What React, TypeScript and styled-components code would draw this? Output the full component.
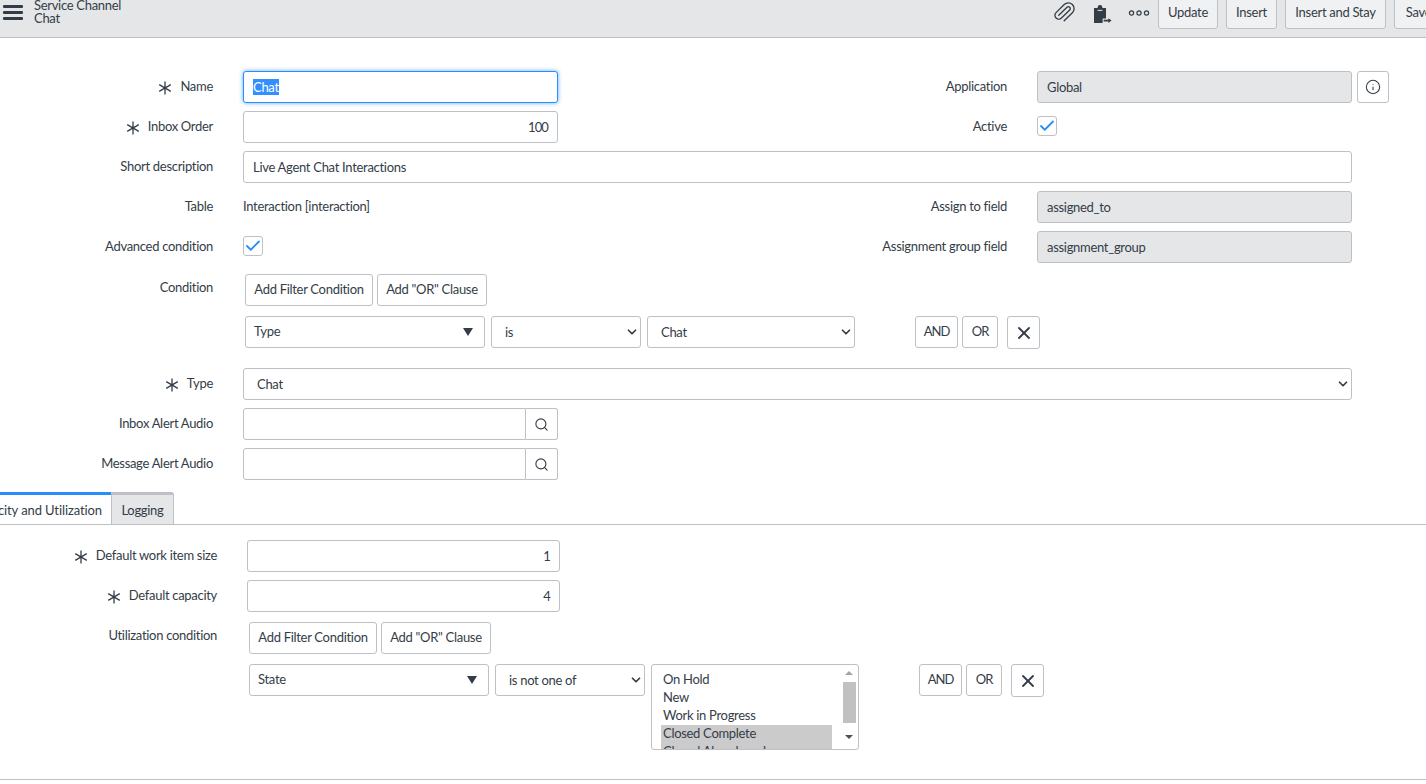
import { FC, ReactNode } from 'react'
import styled, { createGlobalStyle } from 'styled-components'
import { Paperclip, Search, Info, X, ChevronDown, Check } from 'lucide-react'

const colors = {
  text: '#343d47',
  border: '#bdc0c4',
  header: '#e4e6e7',
  readonly: '#e4e6e7',
  blue: '#278efc',
  selection: '#338fff',
}

const GlobalStyle = createGlobalStyle`
  html, body {
    margin: 0;
    padding: 0;
    height: 784px;
    overflow: hidden;
    background: #fff;
  }
  body {
    font-family: 'Lato', 'Open Sans', sans-serif;
    font-size: 13px;
    letter-spacing: -0.3px;
    color: ${colors.text};
  }
`

const Star: FC = () => (
  <StarIcon viewBox="0 0 14 14" width="14" height="14">
    <path d="M7 0.5V13.5M1.2 3.6L12.8 10.4M12.8 3.6L1.2 10.4" stroke={colors.text} strokeWidth="1.3" fill="none" />
  </StarIcon>
)

const ClipboardIcon: FC = () => (
  <svg viewBox="0 0 19 19" width="19" height="19">
    <path d="M1 3h3.6V2.4a2.4 2.4 0 0 1 4.8 0V3H13v10.6h-3.4V18H1z" fill={colors.text} />
    <path d="M4.6 5.4h4.8" stroke={colors.header} strokeWidth="1" />
    <path d="M10.6 15.6h6.4" stroke={colors.text} strokeWidth="1.8" fill="none" />
    <path d="M15.4 13.2l3.2 2.4-3.2 2.4z" fill={colors.text} />
  </svg>
)

const MoreIcon: FC = () => (
  <svg viewBox="0 0 22 6" width="22" height="6">
    <circle cx="3.5" cy="3" r="2.1" stroke={colors.text} strokeWidth="1.2" fill="none" />
    <circle cx="11" cy="3" r="2.1" stroke={colors.text} strokeWidth="1.2" fill="none" />
    <circle cx="18.5" cy="3" r="2.1" stroke={colors.text} strokeWidth="1.2" fill="none" />
  </svg>
)

const Label: FC<{ required?: boolean; children: ReactNode; $raised?: boolean }> = ({ required, children, $raised }) => (
  <LabelBox $raised={$raised}>
    {required && <Star />}
    <span>{children}</span>
  </LabelBox>
)

interface FilterProps {
  field: string
  operator: string
  value?: string
  options?: { name: string; selected?: boolean }[]
}

const FilterRow: FC<FilterProps> = ({ field, operator, value, options }) => (
  <FilterLine>
    <Field $width={240}>
      <FieldText>{field}</FieldText>
      <DownTriangle />
    </Field>
    <Select $width={150}>
      <span>{operator}</span>
      <ChevronDown size={14} strokeWidth={3} />
    </Select>
    {options ? (
      <ListBox>
        <OptionList>
          {options.map((option) => (
            <Option key={option.name} $selected={option.selected}>
              {option.name}
            </Option>
          ))}
        </OptionList>
        <ScrollTrack>
          <ArrowUp />
          <ScrollThumb />
          <ArrowDown />
        </ScrollTrack>
      </ListBox>
    ) : (
      <Select $width={208}>
        <span>{value}</span>
        <ChevronDown size={14} strokeWidth={3} />
      </Select>
    )}
    <LogicButtons>
      <LogicButton $width={43}>AND</LogicButton>
      <LogicButton $width={36}>OR</LogicButton>
      <RemoveButton>
        <X size={20} strokeWidth={2.2} />
      </RemoveButton>
    </LogicButtons>
  </FilterLine>
)

const App: FC = () => {
  const stateOptions = [
    { name: 'On Hold' },
    { name: 'New' },
    { name: 'Work in Progress' },
    { name: 'Closed Complete', selected: true },
    { name: 'Closed Abandoned', selected: true },
  ]

  return (
    <>
      <GlobalStyle />
      <Header>
        <HeaderLeft>
          <Burger>
            <i />
            <i />
            <i />
          </Burger>
          <Titles>
            <div>Service Channel</div>
            <div>Chat</div>
          </Titles>
        </HeaderLeft>
        <HeaderRight>
          <ClipIcon>
            <Paperclip size={23} strokeWidth={1.4} />
          </ClipIcon>
          <ClipboardSlot>
            <ClipboardIcon />
          </ClipboardSlot>
          <MoreSlot>
            <MoreIcon />
          </MoreSlot>
          <HeaderButtons>
            <HeaderButton $width={60}>Update</HeaderButton>
            <HeaderButton $width={51}>Insert</HeaderButton>
            <HeaderButton $width={101}>Insert and Stay</HeaderButton>
            <HeaderButton $width={49}>Save</HeaderButton>
          </HeaderButtons>
        </HeaderRight>
      </Header>

      <Form>
        <Row>
          <Label required>Name</Label>
          <FocusedInput>
            <Selected>Chat</Selected>
          </FocusedInput>
          <RightLabel>Application</RightLabel>
          <ReadOnly>Global</ReadOnly>
          <InfoButton>
            <Info size={16} strokeWidth={1.6} />
          </InfoButton>
        </Row>
        <Row>
          <Label required>Inbox Order</Label>
          <Input $width={315} $right>
            100
          </Input>
          <RightLabel>Active</RightLabel>
          <CheckBox $raised>
            <Check size={18} strokeWidth={2.4} />
          </CheckBox>
        </Row>
        <Row>
          <Label>Short description</Label>
          <Input $width={1109}>Live Agent Chat Interactions</Input>
        </Row>
        <Row>
          <Label>Table</Label>
          <PlainValue>Interaction [interaction]</PlainValue>
          <RightLabel>Assign to field</RightLabel>
          <ReadOnly>assigned_to</ReadOnly>
        </Row>
        <Row>
          <Label>Advanced condition</Label>
          <PlainValue>
            <CheckBox>
              <Check size={18} strokeWidth={2.4} />
            </CheckBox>
          </PlainValue>
          <RightLabel>Assignment group field</RightLabel>
          <ReadOnly>assignment_group</ReadOnly>
        </Row>
        <ConditionBlock $top={3}>
          <Label $raised>Condition</Label>
          <ConditionBody>
            <AddButtons>
              <SmallButton $width={128}>Add Filter Condition</SmallButton>
              <SmallButton $width={110}>Add &quot;OR&quot; Clause</SmallButton>
            </AddButtons>
            <FilterRow field="Type" operator="is" value="Chat" />
          </ConditionBody>
        </ConditionBlock>
        <TypeRow>
          <Label required>Type</Label>
          <Select $width={1109}>
            <span>Chat</span>
            <ChevronDown size={14} strokeWidth={3} />
          </Select>
        </TypeRow>
        <Row>
          <Label>Inbox Alert Audio</Label>
          <Lookup>
            <LookupInput />
            <LookupButton>
              <Search size={15} strokeWidth={1.8} />
            </LookupButton>
          </Lookup>
        </Row>
        <Row>
          <Label>Message Alert Audio</Label>
          <Lookup>
            <LookupInput />
            <LookupButton>
              <Search size={15} strokeWidth={1.8} />
            </LookupButton>
          </Lookup>
        </Row>
      </Form>

      <TabBar>
        <ActiveTab>Capacity and Utilization</ActiveTab>
        <Tab>Logging</Tab>
      </TabBar>

      <TabContent>
        <Row>
          <Label required>Default work item size</Label>
          <Input $width={313} $right>
            1
          </Input>
        </Row>
        <Row>
          <Label required>Default capacity</Label>
          <Input $width={313} $right>
            4
          </Input>
        </Row>
        <ConditionBlock $top={2}>
          <Label $raised>Utilization condition</Label>
          <ConditionBody>
            <AddButtons>
              <SmallButton $width={128}>Add Filter Condition</SmallButton>
              <SmallButton $width={110}>Add &quot;OR&quot; Clause</SmallButton>
            </AddButtons>
            <FilterRow field="State" operator="is not one of" options={stateOptions} />
          </ConditionBody>
        </ConditionBlock>
      </TabContent>
      <Divider />
    </>
  )
}

const Header = styled.header`
  display: flex;
  align-items: flex-end;
  justify-content: space-between;
  height: 38px;
  padding-bottom: 8px;
  box-sizing: border-box;
  background: ${colors.header};
  border-bottom: 1px solid ${colors.border};
  overflow: hidden;
`

const HeaderLeft = styled.div`
  display: flex;
  align-items: flex-end;
  gap: 11px;
  padding-left: 3px;
`

const Burger = styled.div`
  display: flex;
  flex-direction: column;
  gap: 3px;
  width: 20px;
  margin-bottom: 9px;

  i {
    display: block;
    height: 3px;
    border-radius: 1px;
    background: ${colors.text};
  }
`

const Titles = styled.div`
  line-height: 13px;
  margin-bottom: 4px;
`

const HeaderRight = styled.div`
  display: flex;
  align-items: flex-end;
  margin-right: -17px;
`

const ClipIcon = styled.div`
  display: flex;
  width: 23px;
  margin-bottom: 6px;
  margin-right: 17px;
  transform: scaleX(-1) rotate(90deg);
  color: ${colors.text};
`

const ClipboardSlot = styled.div`
  display: flex;
  width: 20px;
  margin-right: 15px;
  margin-bottom: 5px;
`

const MoreSlot = styled.div`
  display: flex;
  width: 22px;
  margin-right: 8px;
  margin-bottom: 13px;
`

const HeaderButtons = styled.div`
  display: flex;
  gap: 8px;
`

const HeaderButton = styled.div<{ $width: number }>`
  display: flex;
  align-items: center;
  justify-content: center;
  flex: none;
  box-sizing: border-box;
  width: ${(p) => p.$width}px;
  height: 34px;
  border: 1px solid ${colors.border};
  border-radius: 3px;
  background: #f0f1f2;
`

const Form = styled.section`
  display: flex;
  flex-direction: column;
  gap: 8px;
  padding-top: 33px;
`

const Row = styled.div`
  display: flex;
  align-items: center;
  height: 32px;
`

const LabelBox = styled.div<{ $raised?: boolean }>`
  display: flex;
  align-items: center;
  justify-content: flex-end;
  gap: 8px;
  flex: none;
  width: 213px;
  margin-right: 30px;
  height: 32px;
  margin-top: ${(p) => (p.$raised ? '-2px' : '0')};
  padding-bottom: 3px;
  box-sizing: border-box;
`

const StarIcon = styled.svg`
  margin-top: 5px;
`

const RightLabel = styled.div`
  flex: none;
  width: 449px;
  margin-right: 30px;
  padding-bottom: 3px;
  text-align: right;
`

const Input = styled.div<{ $width: number; $right?: boolean }>`
  display: flex;
  align-items: center;
  justify-content: ${(p) => (p.$right ? 'flex-end' : 'flex-start')};
  flex: none;
  box-sizing: border-box;
  width: ${(p) => p.$width}px;
  height: 32px;
  padding: 0 9px;
  border: 1px solid ${colors.border};
  border-radius: 3px;
  background: #fff;
  letter-spacing: ${(p) => (p.$right ? '-0.9px' : 'inherit')};
`

const FocusedInput = styled(Input).attrs({ $width: 315 })`
  border-color: ${colors.blue};
  box-shadow: 0 0 4px rgba(39, 142, 252, 0.75);
`

const Selected = styled.span`
  background: ${colors.selection};
  color: #fff;
  line-height: 16px;
`

const ReadOnly = styled(Input).attrs({ $width: 315 })`
  background: ${colors.readonly};
`

const PlainValue = styled.div`
  display: flex;
  align-items: center;
  flex: none;
  width: 315px;
  padding-bottom: 2px;
`

const InfoButton = styled.div`
  display: flex;
  align-items: center;
  justify-content: center;
  box-sizing: border-box;
  width: 32px;
  height: 32px;
  margin-left: 5px;
  border: 1px solid ${colors.border};
  border-radius: 3px;
`

const CheckBox = styled.div<{ $raised?: boolean }>`
  display: flex;
  align-items: center;
  justify-content: center;
  box-sizing: border-box;
  width: 20px;
  height: 20px;
  margin-bottom: ${(p) => (p.$raised ? '2px' : '0')};
  border: 1px solid ${colors.border};
  border-radius: 3px;
  color: ${colors.blue};
`

const ConditionBlock = styled.div<{ $top: number }>`
  display: flex;
  align-items: flex-start;
  margin-top: ${(p) => p.$top}px;
`

const ConditionBody = styled.div`
  display: flex;
  flex-direction: column;
  gap: 10px;
  margin-left: 2px;
`

const AddButtons = styled.div`
  display: flex;
  gap: 4px;
`

const SmallButton = styled.div<{ $width: number }>`
  display: flex;
  align-items: center;
  justify-content: center;
  box-sizing: border-box;
  width: ${(p) => p.$width}px;
  height: 32px;
  padding-bottom: 2px;
  border: 1px solid ${colors.border};
  border-radius: 3px;
  background: #fff;
`

const LogicButton = styled(SmallButton)`
  letter-spacing: -1px;
`

const FilterLine = styled.div`
  display: flex;
  align-items: flex-start;
  gap: 6px;
`

const Field = styled.div<{ $width: number }>`
  display: flex;
  align-items: center;
  justify-content: space-between;
  box-sizing: border-box;
  width: ${(p) => p.$width}px;
  height: 32px;
  padding: 0 11px 0 8px;
  border: 1px solid ${colors.border};
  border-radius: 3px;
`

const FieldText = styled.span`
  margin-top: -2px;
`

const DownTriangle = styled.i`
  width: 0;
  height: 0;
  border-left: 5.5px solid transparent;
  border-right: 5.5px solid transparent;
  border-top: 8px solid ${colors.text};
`

const Select = styled.div<{ $width: number }>`
  display: flex;
  align-items: center;
  justify-content: space-between;
  flex: none;
  box-sizing: border-box;
  width: ${(p) => p.$width}px;
  height: 32px;
  padding: 0 1px 0 13px;
  border: 1px solid ${colors.border};
  border-radius: 3px;
  background: #fff;
`

const ListBox = styled.div`
  display: flex;
  box-sizing: border-box;
  width: 208px;
  height: 86px;
  padding-left: 9px;
  border: 1px solid ${colors.border};
  border-radius: 3px;
  overflow: hidden;
`

const OptionList = styled.div`
  flex: none;
  width: 171px;
  padding-top: 6px;
  overflow: hidden;
`

const Option = styled.div<{ $selected?: boolean }>`
  height: 18px;
  padding-left: 2px;
  line-height: 16px;
  white-space: nowrap;
  background: ${(p) => (p.$selected ? '#cbcbcb' : 'transparent')};
`

const ScrollTrack = styled.div`
  display: flex;
  flex-direction: column;
  align-items: center;
  width: 14px;
  margin-left: 10px;
  padding-top: 6px;
`

const ArrowUp = styled.i`
  width: 0;
  height: 0;
  border-left: 4px solid transparent;
  border-right: 4px solid transparent;
  border-bottom: 4px solid #a3a3a3;
`

const ScrollThumb = styled.div`
  width: 13px;
  height: 41px;
  margin-top: 7px;
  background: #c1c1c1;
`

const ArrowDown = styled.i`
  width: 0;
  height: 0;
  margin-top: 12px;
  border-left: 4px solid transparent;
  border-right: 4px solid transparent;
  border-top: 4px solid #505050;
`

const LogicButtons = styled.div`
  display: flex;
  gap: 4px;
  margin-left: 54px;
`

const RemoveButton = styled(SmallButton).attrs({ $width: 33 })`
  height: 33px;
  margin-left: 5px;
  padding-bottom: 0;
`

const TypeRow = styled(Row)`
  margin-top: 11px;
`

const Lookup = styled.div`
  display: flex;
  width: 315px;
  height: 32px;
`

const LookupInput = styled.div`
  flex: 1;
  border: 1px solid ${colors.border};
  border-radius: 3px 0 0 3px;
`

const LookupButton = styled.div`
  display: flex;
  align-items: center;
  justify-content: center;
  box-sizing: border-box;
  width: 32px;
  border: 1px solid ${colors.border};
  border-left: 0;
  border-radius: 0 3px 3px 0;
`

const TabBar = styled.nav`
  display: flex;
  align-items: flex-end;
  box-sizing: border-box;
  height: 32px;
  margin-top: 13px;
  border-bottom: 1px solid ${colors.border};
`

const ActiveTab = styled.div`
  flex: none;
  box-sizing: border-box;
  width: 180px;
  margin-left: -69px;
  height: 32px;
  padding-top: 3px;
  padding-right: 9px;
  line-height: 24px;
  text-align: right;
  letter-spacing: -0.1px;
  white-space: nowrap;
  border-top: 3px solid ${colors.blue};
  background: #fff;
`

const Tab = styled.div`
  flex: none;
  box-sizing: border-box;
  width: 63px;
  height: 32px;
  padding-top: 3px;
  line-height: 24px;
  text-align: center;
  background: ${colors.header};
  border-top: 3px solid ${colors.border};
  border-left: 1px solid ${colors.border};
  border-right: 1px solid ${colors.border};
  border-top-right-radius: 3px;
`

const TabContent = styled.section`
  display: flex;
  flex-direction: column;
  gap: 8px;
  padding-top: 15px;
  padding-left: 4px;
`

const Divider = styled.hr`
  height: 1px;
  margin: 29px 0 0;
  border: 0;
  background: ${colors.border};
`

export default App
